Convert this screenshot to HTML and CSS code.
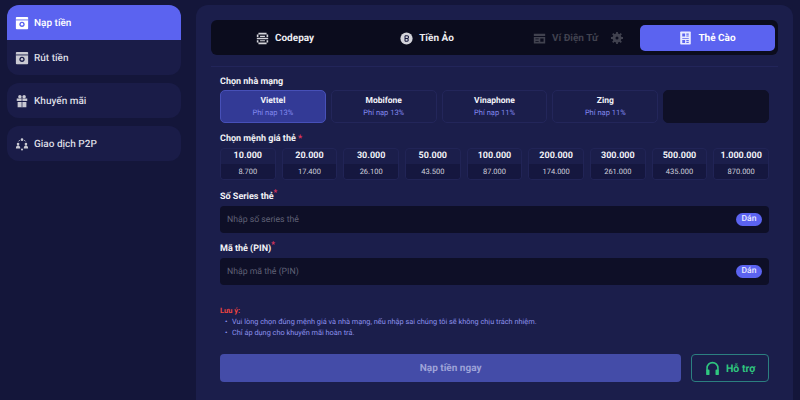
FILE: index.html
```html
<!DOCTYPE html>
<html lang="vi">
<head>
    <meta charset="UTF-8">
    <title>Nạp tiền</title>
    <link rel="stylesheet" href="styles.css">
</head>
<body>
    <div class="app">
        <aside class="sidebar">
            <div class="side-group">
                <div class="side-item active">
                    <svg class="side-icon" viewBox="0 0 16 16"><path fill="#fff" d="M2 1h12a1 1 0 0 1 1 1v12a1 1 0 0 1-1 1H2a1 1 0 0 1-1-1V2a1 1 0 0 1 1-1z"/><rect x="1" y="4" width="14" height="1" fill="#5b63f0"/><circle cx="8" cy="9.5" r="3" fill="#5b63f0"/><circle cx="8" cy="9.5" r="1.4" fill="#fff"/></svg>
                    <span>Nạp tiền</span>
                </div>
                <div class="side-item">
                    <svg class="side-icon" viewBox="0 0 16 16"><path fill="#c9c9d2" d="M2 1h12a1 1 0 0 1 1 1v12a1 1 0 0 1-1 1H2a1 1 0 0 1-1-1V2a1 1 0 0 1 1-1z"/><rect x="1" y="4" width="14" height="1" fill="#1b1e4b"/><circle cx="8" cy="9.5" r="3" fill="#1b1e4b"/><circle cx="8" cy="9.5" r="1.4" fill="#c9c9d2"/></svg>
                    <span>Rút tiền</span>
                </div>
            </div>
            <div class="side-group">
                <div class="side-item">
                    <svg class="side-icon" viewBox="0 0 16 16"><path fill="#c9c9d2" d="M2 5h12v3H2zM3 9h10v6H3z"/><circle cx="5.6" cy="3" r="2" fill="#c9c9d2"/><circle cx="10.4" cy="3" r="2" fill="#c9c9d2"/><path stroke="#1b1e4b" stroke-width=".8" d="M8 5v10M2 8.5h12"/></svg>
                    <span>Khuyến mãi</span>
                </div>
            </div>
            <div class="side-group">
                <div class="side-item">
                    <svg class="side-icon" viewBox="0 0 16 16" fill="#c9c9d2"><circle cx="8" cy="3" r="1.500"/><circle cx="3.500" cy="8" r="1.500"/><circle cx="12.500" cy="8" r="1.500"/><path d="M1 13c0-2 1.100-3.500 2.500-3.500S6 11 6 13zM10 13c0-2 1.100-3.500 2.500-3.500S15 11 15 13z"/><circle cx="8" cy="14.200" r="1.200"/><path fill="none" stroke="#c9c9d2" d="M5.500 3.500 4 5M10.500 3.500 12 5"/></svg>
                    <span>Giao dịch P2P</span>
                </div>
            </div>
        </aside>

        <main class="panel">
            <nav class="tabs">
                <div class="tab">
                    <svg class="tab-icon" viewBox="0 0 16 16" fill="#d4d4da"><path d="M3 1h10v2H3zM3 13h10v2H3zM1 7h14v2H1zM1 3h2v3H1zM13 3h2v3h-2zM1 10h2v3H1zM13 10h2v3h-2zM5 4.500h6v1.500H5zM5 10h6v1.500H5z"/></svg>
                    <span>Codepay</span>
                </div>
                <div class="tab">
                    <svg class="tab-icon" viewBox="0 0 16 16"><circle cx="8" cy="8" r="7.500" fill="#d4d4da"/><path fill="none" stroke="#14163a" stroke-width="1.300" d="M6.200 4.500v7M6.200 4.500h2.600a1.700 1.700 0 0 1 0 3.500H6.200M8.800 8a1.800 1.800 0 0 1 0 3.500H6.200"/></svg>
                    <span>Tiền Ảo</span>
                </div>
                <div class="tab disabled">
                    <svg class="tab-icon" viewBox="0 0 16 16" fill="#41424f"><path d="M1 2h14v3H1zM1 6h14v8H1z"/><path fill="#0b0c1d" d="M3 8h4v1H3zM9 8h4v4H9zM3 11h4v1H3z"/></svg>
                    <span>Ví Điện Tử</span>
                    <svg class="gear" viewBox="0 0 16 16"><circle cx="8" cy="8" r="4.500" fill="none" stroke="#41424f" stroke-width="3"/><path stroke="#41424f" stroke-width="2.400" d="M8 0v16M0 8h16M2.300 2.300l11.400 11.400M13.700 2.300 2.300 13.700"/><circle cx="8" cy="8" r="2" fill="#0b0c1d"/></svg>
                </div>
                <div class="tab active">
                    <svg class="tab-icon large" viewBox="0 0 16 16"><rect x="1.500" width="13" height="16" rx="1" fill="#e9eaff"/><path fill="#5b63f0" d="M4 2.500h3.500V6H4zM9 2.500h3V4H9zM9 5h3v1H9zM4 8h8v1H4zM4 10.500h3.500V14H4zM9 10.500h3V12H9zM9 13h3v1H9z"/></svg>
                    <span>Thẻ Cào</span>
                </div>
            </nav>

            <form class="card-form">
                <label class="field-label">Chọn nhà mạng</label>
                <div class="carriers">
                    <div class="carrier selected"><strong>Viettel</strong><small>Phí nạp 13%</small></div>
                    <div class="carrier"><strong>Mobifone</strong><small>Phí nạp 13%</small></div>
                    <div class="carrier"><strong>Vinaphone</strong><small>Phí nạp 11%</small></div>
                    <div class="carrier"><strong>Zing</strong><small>Phí nạp 11%</small></div>
                    <div class="carrier empty"></div>
                </div>

                <label class="field-label denom-label">Chọn mệnh giá thẻ <em>*</em></label>
                <div class="denoms">
                    <div class="denom"><b>10.000</b><span>8.700</span></div>
                    <div class="denom"><b>20.000</b><span>17.400</span></div>
                    <div class="denom"><b>30.000</b><span>26.100</span></div>
                    <div class="denom"><b>50.000</b><span>43.500</span></div>
                    <div class="denom"><b>100.000</b><span>87.000</span></div>
                    <div class="denom"><b>200.000</b><span>174.000</span></div>
                    <div class="denom"><b>300.000</b><span>261.000</span></div>
                    <div class="denom"><b>500.000</b><span>435.000</span></div>
                    <div class="denom"><b>1.000.000</b><span>870.000</span></div>
                </div>

                <label class="field-label series-label">Số Series thẻ<sup>*</sup></label>
                <div class="input-row">
                    <span class="placeholder">Nhập số series thẻ</span>
                    <span class="paste">Dán</span>
                </div>

                <label class="field-label pin-label">Mã thẻ (PIN)<sup>*</sup></label>
                <div class="input-row">
                    <span class="placeholder">Nhập mã thẻ (PIN)</span>
                    <span class="paste">Dán</span>
                </div>

                <div class="notes">
                    <p>Lưu ý:</p>
                    <ul>
                        <li>Vui lòng chọn đúng mệnh giá và nhà mạng, nếu nhập sai chúng tôi sẽ không chịu trách nhiệm.</li>
                        <li>Chỉ áp dụng cho khuyến mãi hoàn trả.</li>
                    </ul>
                </div>

                <div class="actions">
                    <div class="submit">Nạp tiền ngay</div>
                    <div class="support">
                        <svg viewBox="0 0 16 16" width="15" height="15"><path fill="none" stroke="#2fc67f" stroke-width="1.700" d="M2.200 10V7.500a5.800 5.800 0 0 1 11.600 0V10"/><rect x="1.200" y="9" width="3.600" height="6" rx="1" fill="#2fc67f"/><rect x="11.200" y="9" width="3.600" height="6" rx="1" fill="#2fc67f"/></svg>
                        <span>Hỗ trợ</span>
                    </div>
                </div>
            </form>
        </main>
    </div>
</body>
</html>
```

FILE: styles.css
```css
* {
    box-sizing: border-box;
}

html, body {
    margin: 0;
    height: 400px;
    overflow: hidden;
}

body {
    font-family: "Roboto", "Inter", sans-serif;
    background: #14163a;
    color: #fff;
    text-rendering: geometricPrecision;
}

.app {
    display: flex;
    gap: 15px;
    padding: 5px 7px 0;
    height: 400px;
}

/* Sidebar */
.sidebar {
    width: 174px;
    flex: none;
    display: flex;
    flex-direction: column;
    gap: 8px;
}

.side-group {
    background: #1a1c48;
    border-radius: 12px;
    overflow: hidden;
}

.side-item {
    height: 35px;
    display: flex;
    align-items: center;
    gap: 5px;
    padding-left: 8px;
    font-size: 10px;
    font-weight: 500;
    color: #dcdce4;
}

.side-item span {
    padding-top: 1px;
}

.side-item.active {
    background: #5b63f0;
    color: #fff;
}

.side-icon {
    width: 14px;
    height: 14px;
    flex: none;
}

/* Main panel */
.panel {
    width: 597px;
    flex: none;
    background: #1b1e4b;
    border-radius: 12px 12px 0 0;
    padding: 15px;
}

.tabs {
    display: grid;
    grid-template-columns: 138px 138px 136px 135px;
    gap: 4px;
    height: 35px;
    padding: 5px 3px 4px 5px;
    background: #0b0c1d;
    border-radius: 6px;
}

.tab {
    display: flex;
    align-items: center;
    justify-content: center;
    gap: 6px;
    font-size: 10px;
    font-weight: 700;
    color: #eeeef2;
    border-radius: 5px;
}

.tab.active {
    background: #5b63f0;
    color: #fff;
}

.tab.disabled {
    color: #41424f;
    padding-left: 20px;
}

.tab-icon {
    width: 13px;
    height: 13px;
    flex: none;
}

.tab-icon.large {
    width: 13px;
    height: 14px;
}

.gear {
    width: 12px;
    height: 12px;
    margin-left: 7px;
}

/* Form */
.card-form {
    margin-top: 11px;
    padding: 10px 9px 0;
    border-top: 1px solid #22255a;
}

.field-label {
    display: block;
    font-size: 9px;
    font-weight: 700;
    line-height: 11px;
    color: #f2f2f6;
}

.field-label em {
    color: #e8365d;
    font-style: normal;
}

.field-label sup {
    color: #e8365d;
    font-size: 8px;
    line-height: 0;
}

.carriers {
    display: grid;
    grid-template-columns: repeat(5, 1fr);
    gap: 5px;
    margin-top: 2px;
    height: 33px;
}

.carrier {
    display: flex;
    flex-direction: column;
    align-items: center;
    justify-content: center;
    gap: 1px;
    border: 1px solid #23265a;
    border-radius: 5px;
}

.carrier strong {
    font-size: 8.500px;
    line-height: 11px;
    color: #f2f2f8;
}

.carrier small {
    font-size: 7.500px;
    line-height: 10px;
    color: #8288ee;
}

.carrier.selected {
    background: #333a96;
    border-color: #4750b8;
}

.carrier.empty {
    background: #0f1027;
    border-color: #0f1027;
}

.denom-label {
    margin-top: 11px;
}

.denoms {
    display: grid;
    grid-template-columns: repeat(9, 1fr);
    gap: 6px;
    margin-top: 3px;
}

.denom {
    display: flex;
    flex-direction: column;
    text-align: center;
    border: 1px solid #212456;
    border-radius: 4px;
    overflow: hidden;
}

.denom b {
    height: 15px;
    font-size: 9px;
    line-height: 15px;
    color: #f2f2f8;
}

.denom span {
    height: 15px;
    font-size: 7.500px;
    line-height: 15px;
    color: #d0d0dc;
    background: #15173f;
}

.series-label {
    margin-top: 12px;
}

.pin-label {
    margin-top: 11px;
}

.input-row {
    display: flex;
    align-items: center;
    justify-content: space-between;
    height: 27px;
    margin-top: 3px;
    padding: 0 7px;
    background: #0e0f27;
    border-radius: 4px;
}

.placeholder {
    font-size: 8.700px;
    color: #5f6075;
}

.paste {
    width: 26px;
    height: 13px;
    line-height: 13px;
    text-align: center;
    font-size: 8.500px;
    font-weight: 500;
    border-radius: 7px;
    background: #5b63f0;
    color: #e8e9ff;
}

/* Notes */
.notes {
    margin-top: 20px;
    font-size: 7.350px;
    line-height: 11px;
    color: #8d92ee;
}

.notes p {
    margin: 0;
    font-weight: 700;
    color: #f0453f;
}

.notes ul {
    margin: 0;
    padding-left: 5px;
    list-style: none;
}

.notes li::before {
    content: "•";
    display: inline-block;
    width: 7px;
}

.actions {
    display: flex;
    gap: 10px;
    margin-top: 16px;
}

.submit {
    width: 463px;
    height: 28px;
    padding-top: 1px;
    line-height: 28px;
    text-align: center;
    font-size: 10px;
    font-weight: 700;
    color: #9ea3d8;
    background: #444ca8;
    border-radius: 4px;
}

.support {
    width: 78px;
    height: 28px;
    display: flex;
    align-items: center;
    justify-content: center;
    gap: 6px;
    font-size: 10.500px;
    font-weight: 700;
    color: #2fc67f;
    border: 1px solid #2c7f80;
    border-radius: 4px;
}
```
